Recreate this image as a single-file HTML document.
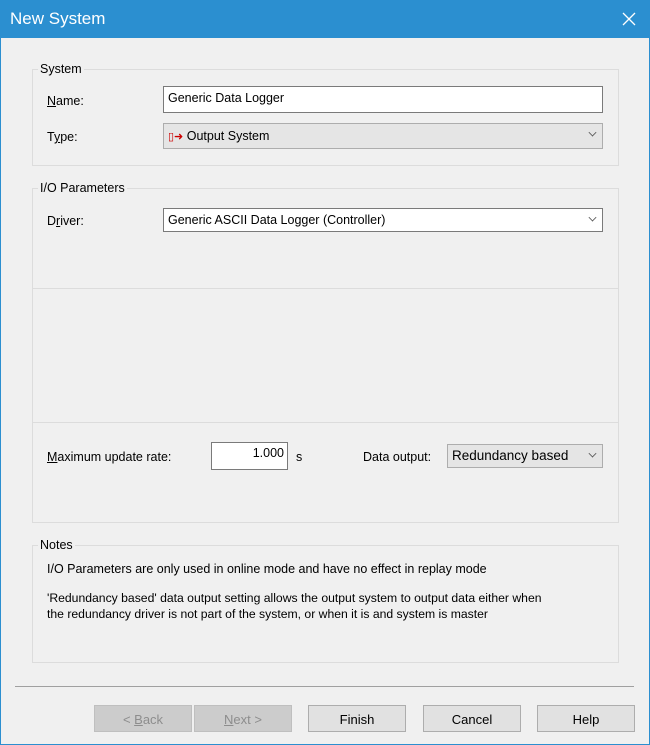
<!DOCTYPE html><html><head><style>
*{margin:0;padding:0;box-sizing:border-box}
body{width:650px;height:745px;background:#f0f0f0;font-family:"Liberation Sans",sans-serif;font-size:12.5px;color:#000;position:relative;overflow:hidden}
.a{position:absolute}
.frame{left:0;top:0;width:650px;height:745px;border:1px solid #2b8fd0}
.title{left:0;top:0;width:650px;height:38px;background:#2b8fd0;color:#fff;font-size:17px;padding:9px 0 0 10px}
.g{border:1px solid #dcdcdc}
.lbl{background:#f0f0f0;padding:0 2px}
.in{background:#fff;border:1px solid #7a7a7a;padding:4px 4px}
.cb{background:#e5e5e5;border:1px solid #adadad;padding:5px 4px}
.arr{position:absolute;right:6px;top:5px;width:7px;height:7px;border-right:1px solid #555;border-bottom:1px solid #555;transform:rotate(45deg) scale(.8)}
.btn{border:1px solid #adadad;background:#e1e1e1;text-align:center;padding-top:6px;height:27px;width:98px;top:705px;font-size:13px}
.dis{background:#cccccc;border-color:#bfbfbf;color:#8d8d8d}
u{text-decoration:underline}
</style></head><body>
<div class="a frame"></div>
<div class="a title">New System</div>
<svg class="a" style="left:622px;top:12px" width="14" height="14"><path d="M1 1L13 13M13 1L1 13" stroke="#fff" stroke-width="1.3"/></svg>
<div class="a g" style="left:32px;top:69px;width:587px;height:97px"></div>
<div class="a lbl" style="left:38px;top:62px">System</div>
<div class="a" style="left:47px;top:94px"><u>N</u>ame:</div>
<div class="a in" style="left:163px;top:86px;width:440px;height:27px">Generic Data Logger</div>
<div class="a" style="left:47px;top:130px">T<u>y</u>pe:</div>
<div class="a cb" style="left:163px;top:123px;width:440px;height:26px"><span style="color:#c00;font-size:11px">▯➜</span> Output System<div class="arr"></div></div>
<div class="a g" style="left:32px;top:188px;width:587px;height:335px"></div>
<div class="a" style="left:33px;top:288px;width:585px;border-top:1px solid #dcdcdc"></div>
<div class="a" style="left:33px;top:422px;width:585px;border-top:1px solid #dcdcdc"></div>
<div class="a lbl" style="left:38px;top:181px">I/O Parameters</div>
<div class="a" style="left:47px;top:214px">D<u>r</u>iver:</div>
<div class="a in" style="left:163px;top:208px;width:440px;height:24px;padding-top:4px">Generic ASCII Data Logger (Controller)<div class="arr"></div></div>
<div class="a" style="left:47px;top:450px"><u>M</u>aximum update rate:</div>
<div class="a in" style="left:211px;top:442px;width:77px;height:28px;text-align:right;padding:3px 3px">1.000</div>
<div class="a" style="left:296px;top:450px">s</div>
<div class="a" style="left:363px;top:450px">Data output:</div>
<div class="a cb" style="left:447px;top:444px;width:156px;height:24px;padding-top:3px;font-size:13.5px">Redundancy based<div class="arr"></div></div>
<div class="a g" style="left:32px;top:545px;width:587px;height:118px"></div>
<div class="a lbl" style="left:38px;top:538px">Notes</div>
<div class="a" style="left:47px;top:562px">I/O Parameters are only used in online mode and have no effect in replay mode</div>
<div class="a" style="left:47px;top:590px;line-height:16px;width:580px;font-size:12.2px;white-space:nowrap">'Redundancy based' data output setting allows the output system to output data either when<br>the redundancy driver is not part of the system, or when it is and system is master</div>
<div class="a" style="left:15px;top:686px;width:619px;border-top:1px solid #a0a0a0"></div>
<div class="a btn dis" style="left:94px">&lt; <u>B</u>ack</div>
<div class="a btn dis" style="left:194px"><u>N</u>ext &gt;</div>
<div class="a btn" style="left:308px">Finish</div>
<div class="a btn" style="left:423px">Cancel</div>
<div class="a btn" style="left:537px">Help</div>
</body></html>
